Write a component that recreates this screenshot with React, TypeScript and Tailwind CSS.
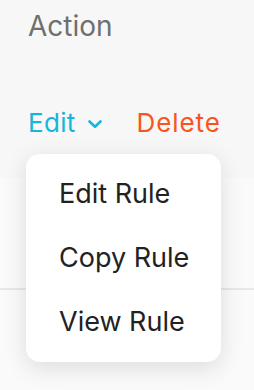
import React from "react";

export default function App() {
  return (
    <div
      className="relative h-[390px] w-[254px] overflow-hidden bg-[#fafafa]"
      style={{ fontFamily: "Inter, 'Noto Sans', sans-serif" }}
    >
      <div className="h-[178px] bg-[#f7f7f7] px-[28px] pt-[10px]">
        <div className="text-[28px] leading-[32px] text-[#6f6f6f]">Action</div>
        <div className="mt-[66px] flex items-center text-[26px] leading-[30px]">
          <span className="tracking-[0.3px] text-[#17b5dc]">Edit</span>
          <svg
            className="ml-[12px] mt-[2px]"
            width="14"
            height="9"
            viewBox="0 0 14 9"
            fill="none"
          >
            <polyline
              points="1.5,1.5 7,6.8 12.5,1.5"
              stroke="#17b5dc"
              strokeWidth="2.6"
              strokeLinecap="round"
              strokeLinejoin="round"
            />
          </svg>
          <span className="ml-[35px] tracking-[0.9px] text-[#fa541c]">Delete</span>
        </div>
      </div>
      <div className="h-[110px]" />
      <div className="h-[2px] bg-[#e8e8e8]" />
      <div className="absolute left-[26px] top-[154px] w-[195px] rounded-[14px] bg-white py-2 shadow-[0_6px_24px_rgba(0,0,0,0.12)]">
        {["Edit Rule", "Copy Rule", "View Rule"].map((t) => (
          <div
            key={t}
            className="flex h-16 items-center pl-[33px] text-[27px] text-[#222222]"
          >
            {t}
          </div>
        ))}
      </div>
    </div>
  );
}
